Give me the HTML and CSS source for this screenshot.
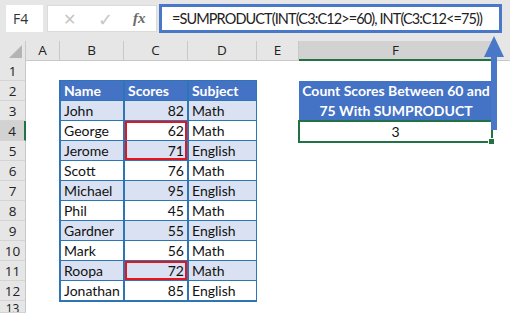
FILE: index.html
```html
<!DOCTYPE html>
<html>
<head>
<meta charset="utf-8">
<link rel="stylesheet" href="styles.css">
</head>
<body>
<div class="app">
  <div class="toolbar">
    <div class="namebox">F4</div>
    <div class="fxbox">
      <span class="ico cancel">✕</span>
      <span class="ico ok">✓</span>
      <span class="ico fx">fx</span>
    </div>
    <div class="formula">=SUMPRODUCT(INT(C3:C12&gt;=60), INT(C3:C12&lt;=75))</div>
  </div>
  <div class="sheet">
    <div class="corner"><svg width="26" height="20" viewBox="0 0 26 20"><polygon points="22,4 22,17 9,17" fill="#b4b4b4"/></svg></div>
    <div class="ch">A</div>
    <div class="ch">B</div>
    <div class="ch">C</div>
    <div class="ch">D</div>
    <div class="ch">E</div>
    <div class="ch sel">F</div>
    <div class="ch last"></div>

    <div class="rh r1">1</div>
    <div class="rh r2">2</div>
    <div class="rh r3">3</div>
    <div class="rh r4 sel">4</div>
    <div class="rh r5">5</div>
    <div class="rh r6">6</div>
    <div class="rh r7">7</div>
    <div class="rh r8">8</div>
    <div class="rh r9">9</div>
    <div class="rh r10">10</div>
    <div class="rh r11">11</div>
    <div class="rh r12">12</div>
    <div class="rh r13">13</div>

    <div class="table">
      <div class="th">Name</div><div class="th">Scores</div><div class="th">Subject</div>
      <div class="td b">John</div><div class="td b num">82</div><div class="td b">Math</div>
      <div class="td">George</div><div class="td num hl-top">62</div><div class="td">Math</div>
      <div class="td b">Jerome</div><div class="td b num hl-bot">71</div><div class="td b">English</div>
      <div class="td">Scott</div><div class="td num">76</div><div class="td">Math</div>
      <div class="td b">Michael</div><div class="td b num">95</div><div class="td b">English</div>
      <div class="td">Phil</div><div class="td num">45</div><div class="td">Math</div>
      <div class="td b">Gardner</div><div class="td b num">55</div><div class="td b">English</div>
      <div class="td">Mark</div><div class="td num">56</div><div class="td">Math</div>
      <div class="td b">Roopa</div><div class="td b num hl">72</div><div class="td b">Math</div>
      <div class="td">Jonathan</div><div class="td num">85</div><div class="td">English</div>
    </div>

    <div class="title">Count Scores Between 60 and<br>75 With SUMPRODUCT</div>
    <div class="result">3<span class="handle"></span></div>
  </div>
  <div class="arrow">
    <svg width="22" height="96" viewBox="0 0 22 96"><polygon points="11,0 21,21 14,21 14,94 8,94 8,21 1,21" fill="#4a78c8"/></svg>
  </div>
</div>
</body>
</html>
```

FILE: styles.css
```css
html, body {
  margin: 0;
  padding: 0;
  background: #ffffff;
}
.app {
  position: relative;
  width: 510px;
  height: 313px;
  overflow: hidden;
  font-family: "Open Sans", "Noto Sans", sans-serif;
}
.toolbar {
  height: 41px;
  background: #e6e6e6;
  display: flex;
  align-items: flex-start;
  padding-top: 5px;
  box-sizing: border-box;
}
.namebox {
  margin-left: 6px;
  width: 37px;
  height: 27px;
  background: #fff;
  box-sizing: border-box;
  font-size: 14px;
  color: #333;
  line-height: 27px;
  padding-left: 7px;
}
.fxbox {
  margin-left: 4px;
  width: 110px;
  height: 27px;
  background: #fff;
  display: flex;
  align-items: center;
  box-sizing: border-box;
  border: 1px solid #dadada;
}
.ico {
  display: block;
  color: #c6c6c6;
  font-size: 16px;
}
.cancel { margin-left: 15px; }
.ok { margin-left: 22px; font-size: 18px; }
.fx {
  margin-left: 20px;
  font-family: "Liberation Serif", serif;
  font-style: italic;
  color: #6a6a6a;
  font-size: 15px;
  font-weight: bold;
}
.formula {
  margin-left: 2px;
  width: 343px;
  height: 29px;
  margin-top: -1px;
  box-sizing: border-box;
  border: 3px solid #4a78c8;
  background: #fff;
  font-family: "Lato", "Open Sans", sans-serif;
  font-size: 14.5px;
  letter-spacing: -0.9px;
  line-height: 23px;
  padding-left: 10px;
  color: #222;
  white-space: nowrap;
}
.sheet {
  display: grid;
  grid-template-columns: 26px 34px 64px 64px 69px 42px 194px 1fr;
  grid-template-rows: 20px repeat(13, 20px);
}
.corner {
  grid-column: 1;
  grid-row: 1;
  background: #e6e6e6;
  border-right: 1px solid #c8c8c8;
  box-sizing: border-box;
}
.corner svg { display: block; }
.ch {
  grid-row: 1;
  background: #e6e6e6;
  border-right: 1px solid #c8c8c8;
  border-bottom: 1px solid #c8c8c8;
  box-sizing: border-box;
  text-align: center;
  font-size: 13.5px;
  line-height: 19px;
  color: #222;
}
.ch.sel {
  background: #d2d2d2;
  border-bottom: 2px solid #217346;
}
.ch.last { border-right: none; }
.rh {
  grid-column: 1;
  background: #e6e6e6;
  border-bottom: 1px solid #d4d4d4;
  border-right: 1px solid #c8c8c8;
  box-sizing: border-box;
  text-align: center;
  font-size: 13.5px;
  line-height: 20px;
  color: #222;
}
.rh.sel {
  background: #d2d2d2;
  border-right: 2px solid #217346;
}
.r1 { grid-row: 2; }
.r2 { grid-row: 3; }
.r3 { grid-row: 4; }
.r4 { grid-row: 5; }
.r5 { grid-row: 6; }
.r6 { grid-row: 7; }
.r7 { grid-row: 8; }
.r8 { grid-row: 9; }
.r9 { grid-row: 10; }
.r10 { grid-row: 11; }
.r11 { grid-row: 12; }
.r12 { grid-row: 13; }
.r13 { grid-row: 14; line-height: 16px; font-size: 12px; overflow: hidden; height: 12px; }

.table {
  grid-column: 3 / 6;
  grid-row: 3 / 14;
  margin-left: -1px;
  margin-top: -1px;
  display: grid;
  grid-template-columns: 62px 62px 67px;
  grid-auto-rows: 19px;
  column-gap: 2px;
  row-gap: 1px;
  padding: 1px 2px 2px 2px;
  background: #2e75b6;
  align-self: start;
  font-family: "Lato", "Open Sans", sans-serif;
  font-size: 14px;
}
.th {
  background: #4472c4;
  color: #fff;
  font-weight: bold;
  line-height: 19px;
  padding-left: 3px;
}
.td {
  background: #fff;
  color: #111;
  line-height: 19px;
  padding-left: 3px;
  white-space: nowrap;
}
.td.b { background: #d9e1f2; }
.td.num {
  text-align: right;
  padding-left: 0;
  padding-right: 3px;
}
.hl-top {
  box-shadow: inset 2px 2px 0 #e8141b, inset -2px 0 0 #e8141b;
}
.hl-bot {
  box-shadow: inset 2px -2px 0 #e8141b, inset -2px 0 0 #e8141b;
}
.hl {
  box-shadow: inset 0 0 0 2px #e8141b;
}
.title {
  grid-column: 7;
  grid-row: 3 / 5;
  background: #4472c4;
  color: #fff;
  font-family: "Lato", "Open Sans", sans-serif;
  font-weight: bold;
  font-size: 14px;
  line-height: 20px;
  text-align: center;
  white-space: nowrap;
}
.result {
  grid-column: 7;
  grid-row: 5;
  margin-left: -1px;
  margin-top: -1px;
  height: 23px;
  box-sizing: border-box;
  border: 2px solid #217346;
  text-align: center;
  font-family: "Lato", "Open Sans", sans-serif;
  font-size: 14px;
  line-height: 19px;
  color: #111;
  position: relative;
}
.handle {
  position: absolute;
  right: -4px;
  bottom: -4px;
  width: 5px;
  height: 5px;
  background: #217346;
  border: 1px solid #fff;
}
.arrow {
  position: absolute;
  left: 483px;
  top: 36px;
}
.arrow svg { display: block; }
```
